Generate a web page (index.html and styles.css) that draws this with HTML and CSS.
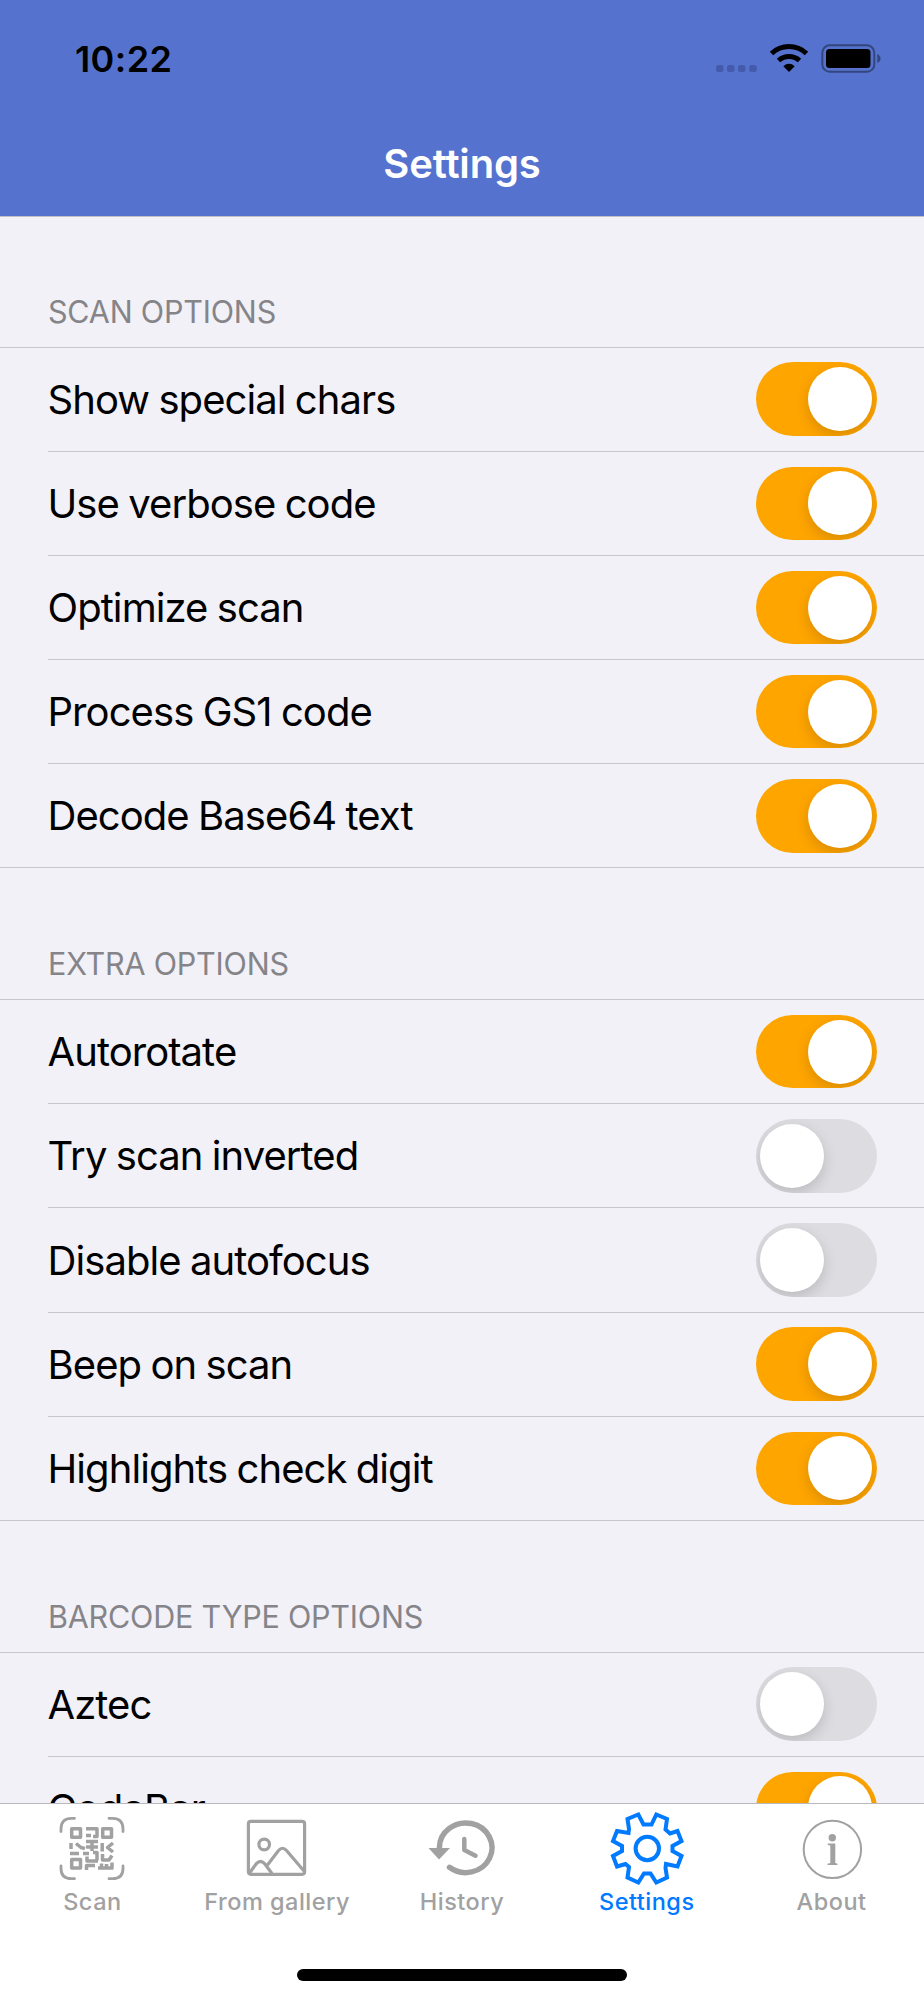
FILE: index.html
```html
<!DOCTYPE html>
<html lang="en">
<head>
<meta charset="utf-8">
<title>Settings</title>
<link rel="stylesheet" href="styles.css">
</head>
<body>
<div class="app">
  <header class="header">
    <div class="status">
      <span class="time">10:22</span>
      <svg class="status-icons" width="170" height="40" viewBox="0 0 170 40">
        <g fill="#435baa"><rect x="2" y="25" width="7.500" height="7" rx="2.500"/><rect x="13" y="25" width="7.500" height="7" rx="2.500"/><rect x="24" y="25" width="7.500" height="7" rx="2.500"/><rect x="35.200" y="25" width="7.500" height="7" rx="2.500"/></g>
        <g fill="none" stroke="#000" stroke-width="5"><path d="M57.500 13.500A25.500 25.500 0 0 1 92.500 13.500"/><path d="M64.500 20.500A15.800 15.800 0 0 1 85.500 20.500"/></g>
        <path d="M69.300 26.200Q75 21.500 80.700 26.200L75 32Z"/>
        <rect x="108.300" y="5.300" width="52" height="26.500" rx="7.500" fill="none" stroke="#34467e" stroke-width="2"/>
        <rect x="112" y="9" width="44.500" height="19" rx="3.500"/>
        <path d="M163.300 14Q166.500 15.500 166.500 18.500T163.300 23Z" fill="#34467e"/>
      </svg>
    </div>
    <h1 class="title">Settings</h1>
  </header>
  <main class="content">
    <section class="section">
      <h2 class="section-title">SCAN OPTIONS</h2>
      <ul class="list">
        <li class="row"><span>Show special chars</span><i class="switch on"></i></li>
        <li class="row"><span>Use verbose code</span><i class="switch on"></i></li>
        <li class="row"><span>Optimize scan</span><i class="switch on"></i></li>
        <li class="row"><span>Process GS1 code</span><i class="switch on"></i></li>
        <li class="row"><span>Decode Base64 text</span><i class="switch on"></i></li>
      </ul>
    </section>
    <section class="section">
      <h2 class="section-title">EXTRA OPTIONS</h2>
      <ul class="list">
        <li class="row"><span>Autorotate</span><i class="switch on"></i></li>
        <li class="row"><span>Try scan inverted</span><i class="switch"></i></li>
        <li class="row"><span>Disable autofocus</span><i class="switch"></i></li>
        <li class="row"><span>Beep on scan</span><i class="switch on"></i></li>
        <li class="row"><span>Highlights check digit</span><i class="switch on"></i></li>
      </ul>
    </section>
    <section class="section">
      <h2 class="section-title">BARCODE TYPE OPTIONS</h2>
      <ul class="list">
        <li class="row"><span>Aztec</span><i class="switch"></i></li>
        <li class="row"><span>CodaBar</span><i class="switch on"></i></li>
      </ul>
    </section>
  </main>
  <nav class="tabs">
    <a class="tab">
      <svg class="icon" viewBox="0 0 80 80">
        <path d="M9 23.500V21Q9 10.300 19.500 10.300H22.500M57 10.300H60.500Q71 10.300 71 21V23.500M71 58V60.500Q71 70.700 60.500 70.700H57M22.500 70.700H19.500Q9 70.700 9 60.500V58" fill="none" stroke="currentColor" stroke-width="2.800" stroke-linecap="round"/>
        <g fill="none" stroke="currentColor" stroke-width="3.500" stroke-linejoin="round">
          <path d="M19.700 20.700H28.500V29.300H19.700ZM50.700 20.700H59.500V29.300H50.700ZM19.700 51.500H28.500V60H19.700Z"/>
          <path d="M34 20.700H45V28.500H41M34 27.500H39M34 33.500H46M40 34V43M34 39H46M50.200 35V43.500M61 35L55.500 39.500L61 44M19 35V41M24 35.500L29 39.500L33 40.500M18 45.500H27M31 45.500H37M41 44.500H45V52.500M35 48.500V53H46M50.500 46V52H57L60 47.500M34.500 62V57.500H43M46 60H61.500M49.500 55.500V60M60 54.500V60M54.500 56V60"/>
        </g>
      </svg>
      <span>Scan</span>
    </a>
    <a class="tab">
      <svg class="icon" viewBox="0 0 80 80" fill="none" stroke="currentColor" stroke-width="3.200" stroke-linejoin="round">
        <rect x="11.400" y="13.300" width="56.200" height="53" rx="2.500"/>
        <circle cx="27.200" cy="36.500" r="5.300"/>
        <path d="M12.500 65L19.500 55.500Q23.500 51.500 27.500 55.500L35 65.500M30.500 57L41.500 42.500Q45.500 38 49.500 42.500L67 63"/>
      </svg>
      <span>From gallery</span>
    </a>
    <a class="tab">
      <svg class="icon" viewBox="0 0 80 80">
        <path d="M17.400 42V39.800A26.300 24.800 0 1 1 27.500 59.300" fill="none" stroke="currentColor" stroke-width="5.500" stroke-linecap="round"/>
        <path d="M6.500 40H28L17 51.500Z" fill="currentColor"/>
        <path d="M42.300 31V42L53.500 47.700" fill="none" stroke="currentColor" stroke-width="4.500" stroke-linecap="round" stroke-linejoin="round"/>
      </svg>
      <span>History</span>
    </a>
    <a class="tab active">
      <svg class="icon" viewBox="0 0 80 80" fill="none" stroke="currentColor" stroke-width="4">
        <circle cx="40.300" cy="40.500" r="11.700"/>
        <path d="M36.500 16.500H44.500L49.300 6.500L60 11L58.500 21.500L63 25.500L70.500 23L74.500 33L65.500 38V43L74.500 48L70.500 58.500L59 56L58.500 60L60 69.500L49.300 74.500L43.500 65.500H37L31.300 74.500L20.500 69.500L22 59L18.500 56L10 58.500L6 48L15 43V38L6 33L10 23L21.500 25L22 21L20.500 11L31.300 6.500Z"/>
      </svg>
      <span>Settings</span>
    </a>
    <a class="tab">
      <svg class="icon" viewBox="0 0 80 80">
        <circle cx="40.400" cy="41.400" r="28.700" fill="none" stroke="currentColor" stroke-width="2"/>
        <circle cx="40.300" cy="29.700" r="3.700" fill="currentColor"/>
        <path d="M35.800 35.500H43.300V55L45.500 55.800V57H35.500V55.800L38.300 55V37.500L35.800 37Z" fill="currentColor"/>
      </svg>
      <span>About</span>
    </a>
    <div class="home-indicator"></div>
  </nav>
</div>
</body>
</html>
```

FILE: styles.css
```css
* { box-sizing: border-box; margin: 0; padding: 0; }
body { background: #f2f1f7; font-family: Inter, "Liberation Sans", sans-serif; color: #000; }
.app { display: flex; flex-direction: column; width: 924px; height: 2000px; overflow: hidden; }
.header { flex: none; height: 217px; background: #5572ce; border-bottom: 1px solid #c0bfca; }
.status { display: flex; justify-content: space-between; align-items: flex-start; height: 118px; padding: 39px 40px 0 75px; }
.time { font-size: 36px; line-height: 40px; font-weight: 600; letter-spacing: .4px; }
.status-icons { display: block; margin-top: 1px; }
.title { color: #fff; font-size: 40px; line-height: 92px; font-weight: 600; text-align: center; letter-spacing: -.15px; }
.content { flex: none; height: 1586px; overflow: hidden; }
.section-title { height: 130.600px; padding: 77px 48px 0; font-size: 30.500px; line-height: 38px; font-weight: 400; letter-spacing: -.2px; color: #858489; }
.section:first-child .section-title { height: 129.500px; padding-top: 76px; }
.list { list-style: none; border-top: 1px solid #c8c7cc; border-bottom: 1px solid #c8c7cc; }
.row { display: flex; align-items: center; justify-content: space-between; height: 104.200px; margin-left: 47.500px; padding-right: 47.500px; font-size: 40px; letter-spacing: -.93px; word-spacing: -1px; border-bottom: 1px solid #c8c7cc; white-space: nowrap; }
.row:last-child { height: 103.200px; border-bottom: 0; }
.switch { display: flex; width: 121px; height: 73.500px; padding: 4.800px; border-radius: 37px; background: #dddce1; overflow: hidden; }
.switch::before { content: ""; width: 64px; height: 64px; border-radius: 50%; background: #fff; box-shadow: 0 5px 14px rgba(0, 0, 0, .16); }
.switch.on { justify-content: flex-end; background: #ffa500; }
.tabs { flex: none; display: grid; grid-template-columns: repeat(5, 1fr); grid-template-rows: 165px 31px; height: 197px; background: #fff; border-top: 1px solid #b9b9be; }
.tab { display: flex; flex-direction: column; align-items: center; padding-top: 4px; color: #a1a1a1; font-size: 23.500px; line-height: 28px; font-weight: 500; letter-spacing: .5px; white-space: nowrap; }
.active { color: #007aff; }
.icon { display: block; width: 80px; height: 80px; }
.home-indicator { grid-column: 1 / -1; justify-self: center; width: 330px; height: 12px; border-radius: 6px; background: #000; }
```
